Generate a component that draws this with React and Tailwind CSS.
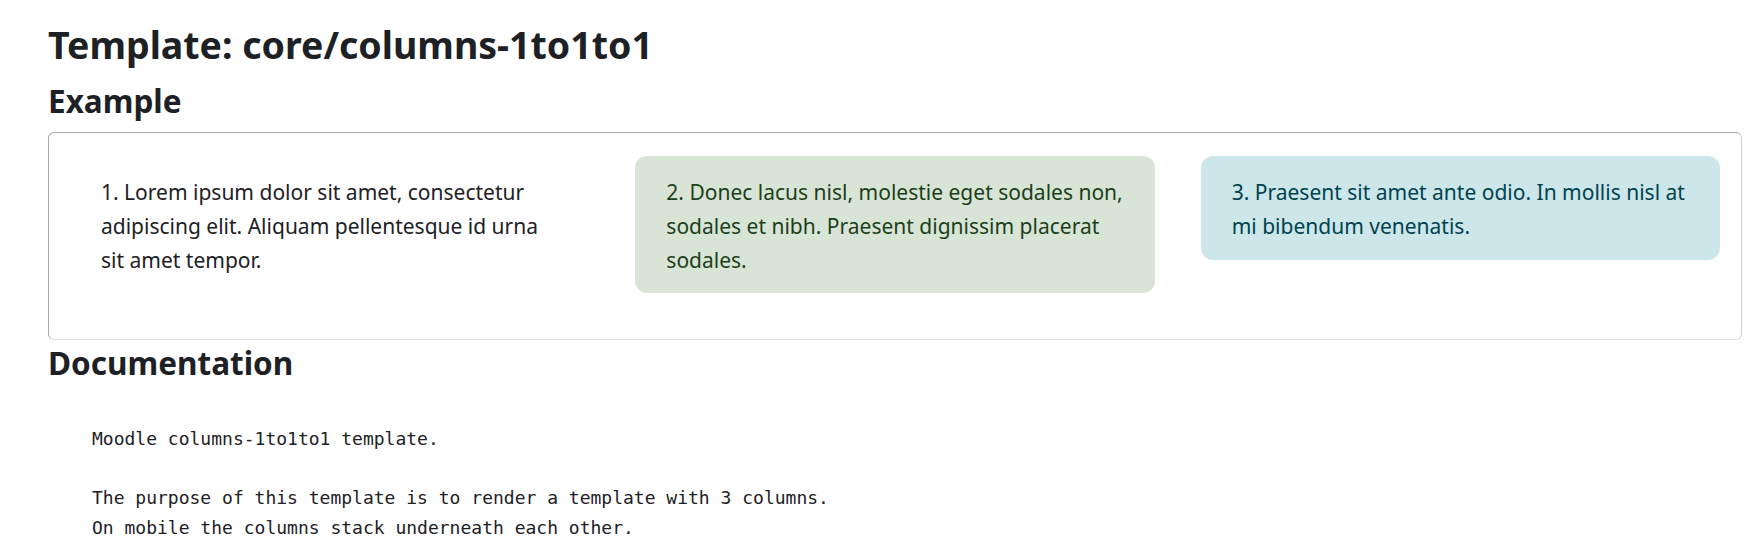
const columns = [
  {
    lines: [
      "1. Lorem ipsum dolor sit amet, consectetur",
      "adipiscing elit. Aliquam pellentesque id urna",
      "sit amet tempor.",
    ],
    className: "text-[#1d2125]",
  },
  {
    lines: [
      "2. Donec lacus nisl, molestie eget sodales non,",
      "sodales et nibh. Praesent dignissim placerat",
      "sodales.",
    ],
    className: "bg-[#d8e4d6] text-[#1c3f1a]",
  },
  {
    lines: [
      "3. Praesent sit amet ante odio. In mollis nisl at",
      "mi bibendum venenatis.",
    ],
    className: "bg-[#cce6ea] text-[#00434e]",
  },
];

const App = () => {
  return (
    <div className="min-h-screen bg-white pl-[48px] pr-[11px] pt-[23px] font-['Noto_Sans',sans-serif] text-[#1d2125]">
      <h2 className="text-[37.5px] font-bold leading-[44px]">
        Template: core/columns-1to1to1
      </h2>

      <h3 className="mt-[16px] text-[31.5px] font-bold leading-[36px]">Example</h3>

      {/* example box */}
      <div className="mt-[13px] rounded-[6px] border border-[#a8a8a8] border-b-[#dedede] border-r-[#d0d0d0] px-[21px] pt-[23px] pb-[46px]">
        <div className="grid grid-cols-3 items-start gap-[46px]">
          {columns.map((col, i) => (
            <div
              key={i}
              className={`rounded-[12px] px-[31px] pt-[20px] pb-[16px] text-[21px] leading-[33.75px] whitespace-nowrap ${col.className}`}
            >
              {col.lines.map((line, j) => (
                <span key={j} className="block">
                  {line}
                </span>
              ))}
            </div>
          ))}
        </div>
      </div>

      <h3 className="mt-[5px] text-[31.5px] font-bold leading-[36px]">Documentation</h3>

      <pre className="mt-[43px] ml-[44px] font-['DejaVu_Sans_Mono',monospace] text-[18px] leading-[29.5px] text-[#1d2125]">
{`Moodle columns-1to1to1 template.

The purpose of this template is to render a template with 3 columns.
On mobile the columns stack underneath each other.`}
      </pre>
    </div>
  );
};

export default App;
